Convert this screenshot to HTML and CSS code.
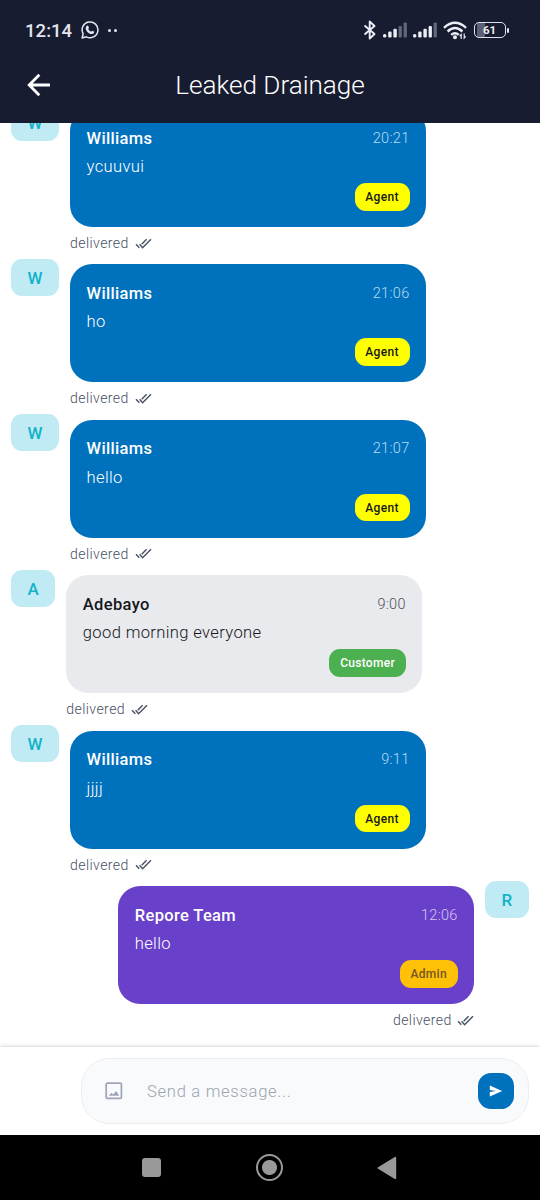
FILE: index.html
```
<!DOCTYPE html>
<html lang="en">
<head>
<meta charset="utf-8">
<title>Leaked Drainage</title>
<link rel="stylesheet" href="styles.css">
</head>
<body>
<svg class="defs" width="0" height="0" aria-hidden="true">
  <symbol id="ticks" viewBox="0 0 17 11"><path d="M1 6.2 4.3 9.7M4.6 6.2 7.6 9.7 16 1.2M6.7 6.2 11.6 1.2" fill="none" stroke="currentColor" stroke-width="1.4"/></symbol>
  <symbol id="signal" viewBox="0 0 24 16"><g fill="#eceef6"><rect x="0" y="12" width="3.4" height="3.4" rx="1.5"/><rect x="5.2" y="9.6" width="3.4" height="5.8" rx="1.2"/><rect x="10.4" y="6.8" width="3.4" height="8.6" rx="1.2"/></g></symbol>
</svg>
<header class="top">
  <div class="status">
    <span class="clock">12:14</span>
    <svg class="whatsapp" width="18" height="18" viewBox="0 0 18 18"><path d="M1.1 17 2.2 12.8A7.9 7.9 0 1 1 5.3 15.8Z" fill="none" stroke="#e3e5ef" stroke-width="1.5" stroke-linejoin="round"/><path d="M6.1 4.7 7 4.6 8 6.8 7.2 8Q8.3 10.1 10.2 10.7L11.2 9.7 13.3 10.7Q13.2 13 10.9 13.1C7.3 12.7 4.7 9.5 4.7 6.9Q4.9 5.2 6.1 4.7Z" fill="#e3e5ef"/></svg>
    <span class="dots"><i></i><i></i></span>
    <div class="system">
      <svg width="14" height="20" viewBox="0 0 14 20"><path d="M1.5 5.5 11.5 14 6.7 18.5V1.5L11.5 6 1.5 14.5" fill="none" stroke="#eceef6" stroke-width="1.9" stroke-linejoin="round"/></svg>
      <svg class="bars" width="24" height="16"><use href="#signal" width="24" height="16"/><rect x="15.6" y="4" width="3.3" height="11.4" rx="1" fill="#62667a"/><rect x="20.6" y=".5" width="3.3" height="14.9" rx="1" fill="#62667a"/></svg>
      <svg class="bars" width="24" height="16"><use href="#signal" width="24" height="16"/><rect x="15.6" y="4" width="3.3" height="11.4" rx="1" fill="#eceef6"/><rect x="20.6" y=".5" width="3.3" height="14.9" rx="1" fill="#62667a"/></svg>
      <svg class="wifi" width="24" height="19" viewBox="0 0 24 19"><path d="M1 6.8Q12-3.2 23 6.8M4.6 10.5Q12 3.7 19.4 10.5M8.2 13.9Q12 10.4 15.8 13.9" fill="none" stroke="#eceef6" stroke-width="2.4"/><circle cx="12" cy="16.2" r="2" fill="#eceef6"/><path d="M18.2 18V13.5L16.7 15.2M21.2 12.5V17L22.7 15.3" fill="none" stroke="#eceef6" stroke-width="1.2"/></svg>
      <div class="battery"><span>61</span></div><i class="cap"></i>
    </div>
  </div>
  <div class="titlebar">
    <svg class="back" width="24" height="24" viewBox="0 0 24 24"><path d="M12.3 1.7 2.2 12 12.3 22.3M2.5 12H23" fill="none" stroke="#fff" stroke-width="2.8"/></svg>
    <h1>Leaked Drainage</h1>
  </div>
</header>

<main class="chat">
  <article class="row">
    <div class="avatar">W</div>
    <div class="message"><div class="bubble agent"><div class="head"><b>Williams</b><time>20:21</time></div><p>ycuuvui</p><span class="tag">Agent</span></div><div class="receipt">delivered<svg width="17" height="11"><use href="#ticks"/></svg></div></div>
  </article>
  <article class="row">
    <div class="avatar">W</div>
    <div class="message"><div class="bubble agent"><div class="head"><b>Williams</b><time>21:06</time></div><p>ho</p><span class="tag">Agent</span></div><div class="receipt">delivered<svg width="17" height="11"><use href="#ticks"/></svg></div></div>
  </article>
  <article class="row">
    <div class="avatar">W</div>
    <div class="message"><div class="bubble agent"><div class="head"><b>Williams</b><time>21:07</time></div><p>hello</p><span class="tag">Agent</span></div><div class="receipt">delivered<svg width="17" height="11"><use href="#ticks"/></svg></div></div>
  </article>
  <article class="row">
    <div class="avatar narrow">A</div>
    <div class="message"><div class="bubble customer"><div class="head"><b>Adebayo</b><time>9:00</time></div><p>good morning everyone</p><span class="tag">Customer</span></div><div class="receipt">delivered<svg width="17" height="11"><use href="#ticks"/></svg></div></div>
  </article>
  <article class="row">
    <div class="avatar">W</div>
    <div class="message"><div class="bubble agent"><div class="head"><b>Williams</b><time>9:11</time></div><p>jjjj</p><span class="tag">Agent</span></div><div class="receipt">delivered<svg width="17" height="11"><use href="#ticks"/></svg></div></div>
  </article>
  <article class="row own">
    <div class="avatar narrow">R</div>
    <div class="message"><div class="bubble admin"><div class="head"><b>Repore Team</b><time>12:06</time></div><p>hello</p><span class="tag">Admin</span></div><div class="receipt">delivered<svg width="17" height="11"><use href="#ticks"/></svg></div></div>
  </article>
</main>

<footer class="composer">
  <div class="field">
    <svg width="18" height="18" viewBox="0 0 18 18"><rect x="1.2" y="1.2" width="15.2" height="15.2" rx="1.2" fill="none" stroke="#9da5b8" stroke-width="1.7"/><path d="M3.8 13.7 6.3 10.7 8.1 12.4 11.2 8.9 14.2 13.7Z" fill="#9da5b8"/></svg>
    <span class="placeholder">Send a message...</span>
    <button class="send" aria-label="Send"><svg width="14" height="12" viewBox="0 0 14 12"><path d="M.8.4 13.2 6 .8 11.6V7.1L7 6 .8 4.9Z" fill="#fff"/></svg></button>
  </div>
</footer>

<nav class="nav">
  <i class="recent"></i>
  <i class="home"></i>
  <svg width="20" height="24" viewBox="0 0 20 24"><path d="M18.3 1.8V22.2L1.5 12Z" fill="#999" stroke="#999" stroke-width="1.8" stroke-linejoin="round"/></svg>
</nav>
</body>
</html>
```
FILE: styles.css
```
* { box-sizing: border-box; }
body { margin: 0; width: 540px; height: 1200px; overflow: hidden; display: flex; flex-direction: column; background: #fff; font-family: Roboto, sans-serif; }
.defs { position: absolute; }
svg { display: block; flex: none; }

.top { height: 123.4px; flex: none; background: #181c30; color: #fff; }
.status { height: 60px; display: flex; align-items: center; padding-left: 25px; }
.clock { width: 56px; font-size: 18.5px; font-weight: 500; letter-spacing: .05px; color: #e3e5ef; padding-top: 2px; }
.dots { display: flex; gap: 3px; margin-left: 8.5px; }
.dots i { width: 3px; height: 3px; border-radius: 50%; background: #e3e5ef; }
.system { margin-left: auto; display: flex; align-items: center; padding-right: 31px; }
.bars { margin: 0 0 0 6px; }
.wifi { margin-left: 6px; }
.battery { width: 32px; height: 16px; margin-left: 7px; border: 1.5px solid #dfe2ef; border-radius: 5px; background: linear-gradient(90deg, #181c30 2px, #5d6074 2px, #5d6074 10px, #181c30 10px); font-size: 11.5px; font-weight: 700; line-height: 14px; text-align: center; color: #eceef6; }
.battery span { display: block; padding-right: 1px; }
.cap { width: 2px; height: 5px; margin-left: 1px; background: #dfe2ef; border-radius: 1px; }
.titlebar { height: 49px; display: grid; grid-template-columns: 60px 1fr 60px; align-items: center; }
.back { margin-left: 26.5px; }
h1 { margin: 0; text-align: center; font-size: 26.1px; font-weight: 300; line-height: 48px; }

.chat { flex: 1; min-height: 0; overflow: hidden; display: flex; flex-direction: column; justify-content: flex-end; padding: 0 11px 11px; }
.row { flex: none; height: 155.4px; display: flex; align-items: flex-start; gap: 11px; }
.own { flex-direction: row-reverse; }
.avatar { width: 48px; height: 37px; border-radius: 11px; background: #c1ebf4; color: #12b3c9; font-size: 17px; font-weight: 500; line-height: 38px; text-align: center; }
.narrow { width: 44.3px; }
.message { width: 356px; padding-top: 5.4px; }
.bubble { height: 118px; border-radius: 22px; padding: 17px 16.5px 16.5px; display: flex; flex-direction: column; }
.head { height: 24px; display: flex; justify-content: space-between; align-items: center; }
.head b { font-size: 16.5px; font-weight: 500; letter-spacing: .35px; }
.head time { font-size: 14.5px; font-weight: 300; letter-spacing: .3px; }
.bubble p { margin: 5px 0 0; font-size: 16.6px; font-weight: 300; line-height: 24px; letter-spacing: .35px; }
.tag { margin-top: auto; align-self: flex-end; height: 27.5px; padding: 0 10.8px; border-radius: 11px; font-size: 12px; font-weight: 500; letter-spacing: .3px; line-height: 28px; }
.agent { background: #0071bd; color: #fff; }
.agent time { color: #b8dcf2; }
.agent .tag { background: #ff0; color: #16191d; }
.customer { background: #e9eaee; color: #15171c; }
.customer time { color: #50535a; }
.customer .tag { background: #4caf50; color: #fff; }
.admin { background: #6940c9; color: #fff; padding-left: 17px; padding-right: 16px; }
.admin time { color: #d5c8f2; }
.admin .tag { background: #ffc107; color: #755820; }
.receipt { height: 32px; display: flex; align-items: center; gap: 6px; color: #485064; font-size: 14.1px; font-weight: 300; letter-spacing: .4px; }
.own .receipt { justify-content: flex-end; gap: 5px; }

.composer { position: relative; height: 88px; flex: none; background: #fff; padding: 11px 11px 11px 80.5px; box-shadow: 0 -1px 3px rgba(0, 0, 0, .16); }
.field { height: 66px; display: flex; align-items: center; padding: 0 14px 0 23.5px; background: #f9fafc; border: 1.5px solid #eceef1; border-radius: 28px; }
.placeholder { margin-left: 24px; color: #9ca3b1; font-size: 16.6px; font-weight: 300; letter-spacing: .7px; }
.send { width: 36px; height: 36px; margin-left: auto; padding: 0; display: grid; place-items: center; border: 0; border-radius: 13px; background: #0071bd; }
.nav { position: relative; height: 65px; flex: none; display: flex; align-items: center; background: #000; padding-left: 142px; }
.recent { width: 19px; height: 19px; border-radius: 3px; background: #999; }
.home { width: 27px; height: 27px; margin: 0 94px 0 95px; border: 2.5px solid #999; border-radius: 50%; background: radial-gradient(circle, #999 7px, #000 8px); }
```
